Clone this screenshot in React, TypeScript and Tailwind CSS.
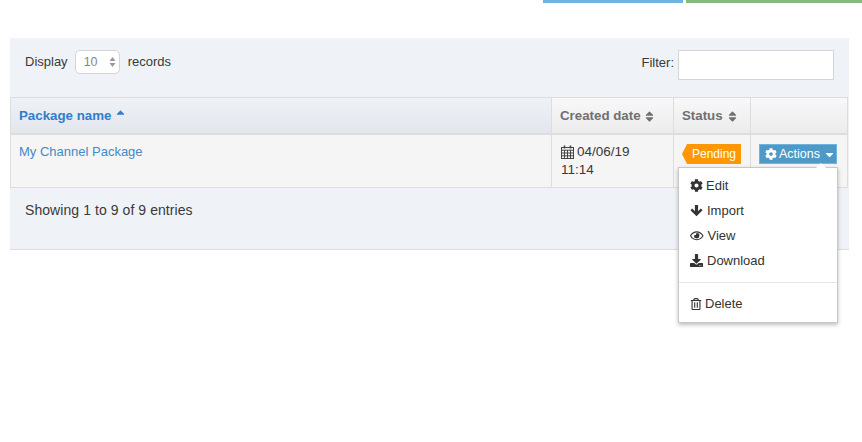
import { FaCog, FaRegEye, FaDownload, FaRegTrashAlt, FaSort, FaSortUp, FaCaretDown } from "react-icons/fa";

function ArrowDownIcon() {
  return (
    <svg width="13" height="13" viewBox="0 0 13 13" fill="currentColor" className="shrink-0">
      <path d="M4.9 1h3.2v6.2l2.7-2.7 1.7 1.7-6 6-6-6 1.7-1.7 2.7 2.7z" />
    </svg>
  );
}

const items = [
  { icon: <FaCog className="text-[13px]" />, label: "Edit", gap: "gap-[3px]" },
  { icon: <ArrowDownIcon />, label: "Import", gap: "gap-[4px]" },
  { icon: <FaRegEye className="text-[13.5px]" />, label: "View", gap: "gap-[4px]" },
  { icon: <FaDownload className="text-[13px]" />, label: "Download", gap: "gap-[4px]" },
];

function CalendarIcon() {
  return (
    <svg width="13" height="14" viewBox="0 0 13 14" fill="none" stroke="#444" strokeWidth="1" className="shrink-0">
      <rect x="0.5" y="2.5" width="12" height="11" />
      <path d="M0.5 5.2h12M0.5 8h12M0.5 10.8h12M3.5 5v8.5M6.5 5v8.5M9.5 5v8.5" />
      <path d="M3.5 0.5v3M9.5 0.5v3" strokeWidth="1.6" />
    </svg>
  );
}

export default function App() {
  return (
    <div className="relative w-[862px] h-[442px] bg-white overflow-hidden text-[13px] leading-[18px] text-[#333] font-['Liberation_Sans',Arial,sans-serif]">
      <div className="flex justify-end gap-[3px] h-[3px]">
        <div className="w-[140px] bg-[#6fb3e0]" />
        <div className="w-[176px] bg-[#87b87f]" />
      </div>
      <div className="ml-[10px] mt-[35px] w-[839px] h-[212px] bg-[#eff3f8] border-b border-[#dddddd] flex flex-col">
        <div className="h-[59px] flex justify-between pl-[15px] pr-[15px] pt-[12px]">
          <div className="flex items-center h-[24px] text-[#393939]">
            <span>Display</span>
            <div className="ml-[7px] mr-[8px] w-[45px] h-[24px] bg-white border border-[#d5d5d5] rounded-[5px] flex items-center justify-between pl-[8px] pr-[3px] text-[#858585] text-[12.5px]">
              <span>10</span>
              <svg width="7" height="12" viewBox="0 0 7 12" className="text-[#999]" fill="currentColor"><path d="M3.5 1 6.5 5H.5zM3.5 11 .5 7h6z" /></svg>
            </div>
            <span>records</span>
          </div>
          <div className="flex items-start gap-[4px] text-[#393939]">
            <span className="mt-[4px]">Filter:</span>
            <div className="w-[156px] h-[30px] bg-white border border-[#d5d5d5]" />
          </div>
        </div>
        <div className="w-[838px] border-l border-r border-[#dddddd]">
          <div className="flex h-[38px] border-t border-b-2 border-[#dddddd] font-bold text-[13.3px]">
            <div className="w-[541px] pl-[8px] pt-[9px] border-r border-[#dddddd] bg-gradient-to-b from-[#eef1f6] to-[#e3e6ec] text-[#307ecc] flex items-start gap-[3px]">
              <span>Package name</span>
              <FaSortUp className="text-[13px] mt-[2px]" />
            </div>
            <div className="w-[122px] pl-[8px] pt-[9px] border-r border-[#dddddd] bg-gradient-to-b from-[#f8f8f8] to-[#ececec] text-[#707070] flex items-start gap-[2px]">
              <span>Created date</span>
              <FaSort className="text-[13px] mt-[3px]" />
            </div>
            <div className="w-[77px] pl-[8px] pt-[9px] border-r border-[#dddddd] bg-gradient-to-b from-[#f8f8f8] to-[#ececec] text-[#707070] flex items-start gap-[3px]">
              <span>Status</span>
              <FaSort className="text-[13px] mt-[3px]" />
            </div>
            <div className="flex-1 bg-gradient-to-b from-[#f8f8f8] to-[#ececec]" />
          </div>
          <div className="flex h-[53px] border-b border-[#dddddd] bg-[#f5f5f5]">
            <div className="w-[541px] pl-[8px] pt-[8px] border-r border-[#dddddd] text-[#428bca]">My Channel Package</div>
            <div className="w-[122px] pl-[9px] pt-[8px] border-r border-[#dddddd] text-[#393939]">
              <div className="flex items-center gap-[3px] text-[13.5px]"><CalendarIcon /><span>04/06/19</span></div>
              <div className="text-[13.5px]">11:14</div>
            </div>
            <div className="w-[77px] pl-[8px] pt-[9px] border-r border-[#dddddd]">
              <div className="flex h-[20px]">
                <div className="w-0 h-0 border-y-[10px] border-y-transparent border-r-[5px] border-r-[#ff9800]" />
                <div className="w-[54px] h-[20px] bg-[#ff9800] text-white text-[12px] flex items-center justify-center leading-none">Pending</div>
              </div>
            </div>
            <div className="flex-1 pl-[8px] pt-[9px]">
              <div className="w-[78px] h-[20px] bg-[#4f99c6] border border-[#6fb3e0] text-white text-[12.5px] flex items-center pl-[5px] gap-[2px]">
                <FaCog className="text-[12px]" />
                <span>Actions</span>
                <FaCaretDown className="text-[13px] ml-[1px]" />
              </div>
            </div>
          </div>
        </div>
        <div className="pl-[15px] pt-[13px] text-[#393939] text-[14px] tracking-[0.07px]">Showing 1 to 9 of 9 entries</div>
      </div>

      <div className="absolute left-[678px] top-[167px] w-[160px] h-[156px] bg-white border border-[#c8c8c8] shadow-[0_2px_4px_rgba(0,0,0,0.25)] text-[#333] pt-[5px]">
        <div className="absolute -top-[5px] left-[137px] w-0 h-0 border-x-[5px] border-x-transparent border-b-[5px] border-b-white" />
        {items.map((it) => (
          <div key={it.label} className={`flex items-center h-[25px] pl-[11px] ${it.gap}`}>
            {it.icon}
            <span>{it.label}</span>
          </div>
        ))}
        <div className="h-px bg-[#e5e5e5] mt-[9px]" />
        <div className="flex items-center h-[25px] mt-[8px] pl-[11px] gap-[3px]">
          <FaRegTrashAlt className="text-[12px]" />
          <span>Delete</span>
        </div>
      </div>
    </div>
  );
}
